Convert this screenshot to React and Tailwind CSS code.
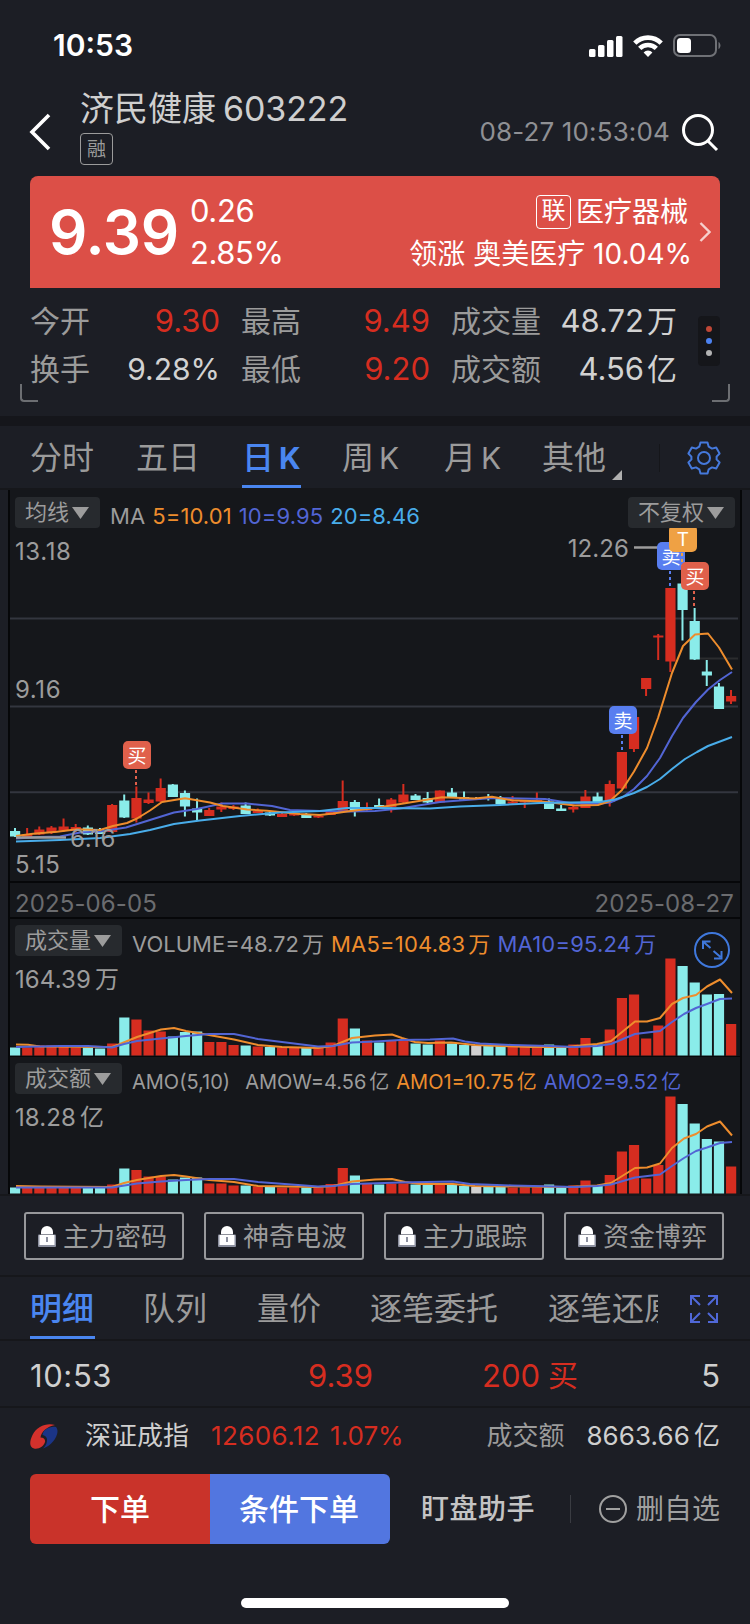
import { useState } from 'react';

const UP = '#d62d20';
const DOWN = '#8aecea';
const ORANGE = '#ee8d2d';
const INDIGO = '#5265d4';
const SKY = '#49adea';

const STEP = 12.136;
const barX = (i) => 15 + i * STEP;

// [direction, high, body top, body bottom, low]
const candles = [
  ['d', 828, 831, 836.5, 837], ['u', 828, 834.5, 837, 837], ['u', 826.5, 829.5, 834.5, 835], ['u', 826, 827.5, 832.5, 834],
  ['u', 818.5, 826.5, 830.5, 832], ['u', 824, 827, 830.5, 832], ['d', 825.5, 827.5, 834.5, 835], ['d', 828, 831.5, 834, 834],
  ['u', 804, 805, 832, 832], ['d', 794.5, 800.5, 817.5, 818], ['u', 786.5, 798, 818.5, 822.5], ['u', 792.5, 799.5, 803, 804],
  ['u', 778.5, 788, 801.5, 802], ['d', 784, 784.5, 797, 797], ['d', 790.5, 793, 806.5, 816.5], ['d', 798.5, 808.5, 812.5, 820.5],
  ['u', 808, 810, 816, 816], ['u', 802.5, 806.5, 809.5, 812], ['u', 805, 806.5, 809, 810], ['d', 802.5, 805.5, 814, 814],
  ['u', 808.5, 811, 813, 813], ['d', 812, 812.5, 815.5, 816], ['u', 813, 814, 817, 817], ['u', 813, 813.5, 815.5, 816],
  ['d', 813, 814, 818, 818], ['u', 815, 816, 817.5, 818], ['u', 809, 812, 815, 815], ['u', 780.5, 801, 811, 812],
  ['d', 800, 802, 811, 816.5], ['u', 802.5, 807, 810, 811], ['d', 798.5, 805, 807.5, 808], ['u', 798, 799.5, 807, 812.5],
  ['u', 784, 794.5, 802.5, 803], ['d', 794, 795.5, 800, 800], ['d', 792, 798, 802.5, 803], ['u', 790.5, 790.5, 802.5, 802.5],
  ['d', 788, 792.5, 797.5, 798], ['d', 791.5, 797, 799.5, 800], ['f', 797, 798, 799.5, 800], ['d', 794, 797, 798.5, 800.5],
  ['d', 796, 798, 804, 804], ['u', 796, 801.5, 803.5, 804], ['u', 801, 801, 802.5, 808], ['u', 792.5, 800, 802, 802],
  ['d', 798.5, 801.5, 809, 809], ['d', 805, 808.5, 811, 811], ['u', 805, 807, 809.5, 812.5], ['u', 790, 796.5, 808, 808],
  ['d', 792.5, 796.5, 802, 802], ['u', 780.5, 784, 802, 806.5], ['u', 752, 752, 788.5, 789], ['u', 717, 717, 749, 752],
  ['u', 678, 678, 689, 696], ['u', 634, 635.5, 637.5, 660], ['u', 588, 588, 661.5, 672], ['d', 566, 583.5, 610, 640.5],
  ['d', 608, 621, 659.5, 660], ['d', 660, 671.5, 675.5, 686], ['d', 683, 686.5, 709, 709], ['u', 690, 696, 701.5, 704],
];

const volume = [
  8, 8, 10, 10, 9, 8, 8, 7, 12, 38, 36, 25, 24, 19, 23.5, 24, 13.5, 13.5, 10.5, 10, 9, 8.5, 8, 7.5, 7.5, 8, 13, 37, 27, 15,
  13, 15, 15, 12, 11, 15, 12, 10.5, 10, 10.5, 9.5, 8.5, 8.5, 8.5, 11, 8.5, 11, 17.5, 11, 26, 57.5, 61, 17, 30, 97, 89.5,
  73, 61, 61.5, 31.5,
];

const amount = [
  6, 6.5, 7.5, 7.5, 7, 6.5, 6, 5.5, 9, 25, 23.5, 17, 17, 14, 16, 16, 10, 10, 8, 8, 7, 6.5, 6, 6, 6, 6, 9.5, 25.5, 18, 10,
  9, 10, 10, 9, 8.5, 10, 8.5, 7.5, 7, 7.5, 7, 6, 6, 6, 9, 6, 8, 13, 8, 18.5, 42, 48.5, 15, 28.5, 97, 89.5, 70, 54.5, 52, 27,
];

const lines = {
  ma5: '16,836 33,833.7 57,831.7 77,829.3 100,830 113,826 127,823 137,818.5 150,810.5 162,802 185,798.3 210,802.5 223,806 247,809.5 267,810.7 300,814 320,815 333,813.5 347,811.5 375,808 405,803.3 442,797.3 475,798.5 492,796.7 512,800.3 542,801.5 555,803 575,805.5 598,805 610,801 622,790 634,771.5 647,748 658,718 672,673 683,646 695,634.5 708,633.5 719,647.5 732,669.5',
  ma10: '16,838.5 40,837 60,836.5 80,832.5 100,831.5 126,827.5 150,820 174,812.5 197,809 222,803.5 247,803.5 272,806 290,810 320,811 350,811.5 375,811 400,808.5 440,802 492,798 545,799 570,803 597,804 610,802.5 622,797.5 634,789 647,776 660,758 672,736 683,718 696,702 708,689.5 720,680 732,672',
  ma20: '16,841.5 60,840 100,838 130,834 150,830 174,824 200,820.5 240,816 280,812.5 320,811 347,808 375,808 430,808.5 460,806.5 500,805 540,803 600,802 615,799.5 634,793 647,787 660,779 672,769 685,759 697,752 708,746 732,737',
  vol5: '16,1044.5 28,1044.8 40,1046.5 112,1047 120,1044 137,1037 161,1029.5 174,1028 186,1031 209,1035 234,1039.5 258,1045 282,1047 318,1048 333,1046 352,1038 375,1035.5 392,1034.5 402,1038 415,1042 428,1043 451,1042.5 475,1045 500,1046 530,1047 567,1047 585,1045 597,1044 611,1041 635,1021.5 647,1021.5 660,1018 672,1004 683,998 696,995 707,986.5 720,979.5 732,993',
  vol10: '16,1047 60,1046 88,1046 112,1047.5 124,1044 137,1041 161,1038.5 186,1036 209,1034 234,1034 258,1039 282,1042 318,1046.5 333,1046 352,1042.5 375,1041.5 400,1040 430,1039.5 453,1038.5 465,1041.5 480,1043.5 512,1045 550,1046 575,1047 597,1046 611,1044 635,1034 660,1031 672,1022 684,1014 696,1008 707,1004 720,999 732,998.5',
  amo5: '16,1186 40,1186.5 112,1187 124,1183 137,1180 161,1176 174,1175 186,1176.5 209,1180 234,1182 258,1186 318,1187 333,1186 352,1181.5 375,1179.5 392,1179 405,1182 420,1184 453,1184 475,1186 567,1187 597,1185.5 611,1183 635,1168 647,1167.5 660,1163.5 672,1148 684,1138.5 696,1134 707,1126.5 720,1121.5 732,1135.5',
  amo10: '16,1187.5 112,1187.5 137,1183.5 161,1181.5 186,1180 209,1179 234,1179 258,1182 318,1186.5 333,1186 352,1184 400,1182.5 453,1181.5 470,1184 512,1185.5 575,1187 597,1186 611,1184.5 635,1177.5 660,1174.5 672,1166 684,1158 696,1151 707,1147.5 720,1143 732,1142',
};

const colorOf = (dir) => (dir === 'u' ? UP : dir === 'd' ? DOWN : '#d0d0d0');

function Line({ points, color }) {
  return <polyline points={points} fill="none" stroke={color} strokeWidth="2" strokeLinejoin="round" />;
}

function Bars({ data, bottom }) {
  return data.map((h, i) => (
    <rect key={i} x={barX(i) - 5} y={bottom - h} width="10.2" height={h} fill={colorOf(candles[i][0])} />
  ));
}

function Marker({ x, y, color, label, h = 28, stem = 16 }) {
  return (
    <g>
      <line x1={x + 13} x2={x + 13} y1={y + h + 1} y2={y + h + stem} stroke={color} strokeWidth="2" strokeDasharray="3 3" />
      <rect x={x} y={y} width="28" height={h} rx="5" fill={color} />
      <text x={x + 14} y={y + h / 2 + 7.5} textAnchor="middle" fontSize="19" fill="#fff">{label}</text>
    </g>
  );
}

function Pill({ children, className = '' }) {
  return (
    <button className={`flex h-[31px] items-center gap-[3px] rounded bg-[#272a2e] pl-[10px] text-[22px] leading-none text-[#9c9c9c] ${className}`}>
      <span className="-mt-0.5">{children}</span>
      <svg width="17" height="12" viewBox="0 0 17 12"><path d="M0 0h17L8.500 12z" fill="#9c9c9c" /></svg>
    </button>
  );
}

function Quote({ label, value, unit, color = 'text-[#d2d2d2]' }) {
  return (
    <div className="flex items-center justify-between">
      <span className="text-[#9b9b9b]">{label}</span>
      <span className={`flex gap-[3px] ${color}`}>
        <span className={value.endsWith('%') ? 'text-[30px]' : 'text-[31px]'}>{value}</span>
        {unit && <span>{unit}</span>}
      </span>
    </div>
  );
}

function LockIcon() {
  return (
    <svg width="18" height="22" viewBox="0 0 18 22">
      <path d="M3 9.500V7a6 6 0 0 1 12 0v2.500z" fill="#fff" />
      <rect x="0" y="9.500" width="18" height="12.500" rx="1" fill="#8d91a0" />
      <rect x="1.500" y="10" width="15" height="10" fill="#fff" />
      <rect x="8" y="12" width="2" height="5" fill="#8d91a0" />
    </svg>
  );
}

function StatusBar() {
  return (
    <div className="flex h-[88px] items-start justify-between pl-[53px] pr-[29px]">
      <span className="mt-[30px] text-[30px] font-semibold leading-[30px] text-white">10:53</span>
      <div className="mt-[34px] flex items-center">
        <svg width="34" height="22" viewBox="0 0 34 22" fill="#fff">
          <rect x="0" y="14" width="6.500" height="8" rx="1.500" />
          <rect x="9" y="10" width="6.500" height="12" rx="1.500" />
          <rect x="18" y="5" width="6.500" height="17" rx="1.500" />
          <rect x="27" y="1" width="6.500" height="21" rx="1.500" />
        </svg>
        <svg className="ml-[10px]" width="30" height="22" viewBox="0 0 30 22" fill="none" stroke="#fff" strokeWidth="4.600">
          <path d="M1.800 8.200a18.500 18.500 0 0 1 26.400 0" />
          <path d="M6.700 13.400a11.800 11.800 0 0 1 16.600 0" />
          <path d="M15 22l-4.400-4.600a6.200 6.200 0 0 1 8.800 0z" fill="#fff" stroke="none" />
        </svg>
        <svg className="ml-[10px]" width="48" height="23" viewBox="0 0 48 23">
          <rect x="1" y="1" width="42" height="21" rx="6" fill="none" stroke="#6f7176" strokeWidth="2" />
          <rect x="4" y="4" width="14" height="15" rx="3.500" fill="#fff" />
          <path d="M45.500 8c2.600 1.200 2.600 6 0 7z" fill="#6f7176" />
        </svg>
      </div>
    </div>
  );
}

function Header() {
  return (
    <div className="flex h-[88px] items-start">
      <svg className="ml-[29px] mt-[25px]" width="22" height="38" viewBox="0 0 22 38" fill="none" stroke="#fff" strokeWidth="3.600">
        <path d="M20 2L3 19l17 17" />
      </svg>
      <div className="ml-[29px]">
        <div className="mt-[3px] flex gap-[7px] whitespace-nowrap text-[34px] leading-[36px] text-[#cfcfcf]">
          <span>济民健康</span>
          <span className="tracking-[-0.1px]">603222</span>
        </div>
        <div className="mt-[6px] flex h-8 w-[33px] items-center justify-center rounded border border-[#9b9b9b] text-[19px] leading-none text-[#9b9b9b]">
          <span>融</span>
        </div>
      </div>
      <span className="ml-auto mt-[30px] text-[26px] leading-[28px] tracking-[0.15px] text-[#8f9094]">08-27 10:53:04</span>
      <svg className="ml-[11px] mr-[31px] mt-[26px]" width="38" height="38" viewBox="0 0 38 38" fill="none" stroke="#fff" strokeWidth="3">
        <circle cx="17" cy="16" r="14.500" />
        <path d="M27 27l9 9" />
      </svg>
    </div>
  );
}

function PriceCard() {
  return (
    <div className="mx-[30px] flex h-28 items-center rounded-t-lg bg-[#dc4f47] text-white">
      <span className="ml-[19px] w-[141px] text-[60px] font-semibold leading-none tracking-[-0.3px]">9.39</span>
      <div className="flex flex-col gap-[10px] text-[31px] leading-8">
        <span className="tracking-[-0.4px]">0.26</span>
        <span className="tracking-[-0.4px]">2.85%</span>
      </div>
      <div className="ml-auto mt-[2px] flex flex-col items-end gap-[8px] text-[28px] leading-[34px]">
        <div className="flex items-center gap-[5px] pr-[4px]">
          <span className="flex h-[34px] w-[35px] items-center justify-center rounded border border-white text-[24px] leading-none">
            <span className="-mt-0.5">联</span>
          </span>
          <span>医疗器械</span>
        </div>
        <span className="whitespace-nowrap">领涨 奥美医疗 10.04%</span>
      </div>
      <svg className="ml-[7px] mr-[9px]" width="12" height="20" viewBox="0 0 12 20" fill="none" stroke="#f6cfcc" strokeWidth="2.400">
        <path d="M1.500 1l9 9-9 9" />
      </svg>
    </div>
  );
}

function Quotes() {
  return (
    <div className="relative flex h-[128px] pl-[30px] pt-[9px]">
      <div className="grid h-[96px] w-[647px] grid-cols-[190px_189px_226px] grid-rows-2 gap-x-[21px] whitespace-nowrap text-[30px] leading-[48px]">
        <Quote label="今开" value="9.30" color="text-[#d62d20]" />
        <Quote label="最高" value="9.49" color="text-[#d62d20]" />
        <Quote label="成交量" value="48.72" unit="万" />
        <Quote label="换手" value="9.28%" />
        <Quote label="最低" value="9.20" color="text-[#d62d20]" />
        <Quote label="成交额" value="4.56" unit="亿" />
      </div>
      <div className="ml-[21px] mt-[19px] flex h-[50px] w-[22px] flex-col items-center justify-center gap-1.5 rounded bg-[#15161a]">
        <span className="size-1.5 rounded-full bg-[#bf4736]" />
        <span className="size-1.5 rounded-full bg-[#4c82f0]" />
        <span className="size-1.5 rounded-full bg-[#b3b3b3]" />
      </div>
      <span className="absolute left-5 top-24 h-[18px] w-[18px] rounded-bl-sm border-b-2 border-l-2 border-[#6c6e72]" />
      <span className="absolute right-5 top-24 h-[18px] w-[18px] rounded-br-sm border-b-2 border-r-2 border-[#6c6e72]" />
    </div>
  );
}

function PeriodTabs({ active, onChange }) {
  const tabs = [['分时'], ['五日'], ['日', 'K'], ['周', 'K'], ['月', 'K'], ['其他']];
  return (
    <div className="flex h-16 border-b-2 border-[#16171b] pl-[30px]">
      <div className="grid grid-cols-[106px_106px_100px_102px_98px_117px] text-[32px]">
        {tabs.map(([a, b], i) => (
          <button key={a} onClick={() => onChange(i)} className="flex">
            <span
              className={`relative flex h-[62px] items-start gap-[5px] pt-[14px] leading-[36px] ${
                i === active ? 'font-medium text-[#4a86f0]' : 'text-[#9b9b9b]'
              }`}
            >
              {a}
              {b && <span className={i === active ? 'text-[30px] font-bold' : 'text-[30px]'}>{b}</span>}
              {i === active && <i className="absolute bottom-0 left-0 h-[3px] w-[59px] bg-[#4a86f0]" />}
            </span>
            {a === '其他' && (
              <svg className="ml-[6px] mt-[44px]" width="10" height="10" viewBox="0 0 10 10"><path d="M10 0v10H0z" fill="#b0b0b0" /></svg>
            )}
          </button>
        ))}
      </div>
      <span className="mt-[18px] h-[28px] w-px bg-[#15161a]" />
      <svg className="ml-[27px] mt-[15px]" width="34" height="34" viewBox="0 0 34 34" fill="none" stroke="#4579dc" strokeWidth="2" strokeLinejoin="round">
        <path d="M13.500 1.500h7l1.200 4.200 3.300 1.900 4.200-1.100 3.400 6-3 3.100v2.800l3 3.100-3.400 6-4.200-1.100-3.300 1.900-1.200 4.200h-7l-1.200-4.200L9 26.400l-4.200 1.100-3.400-6 3-3.100v-2.800l-3-3.100 3.400-6L9 7.600l3.300-1.900z" />
        <circle cx="17" cy="17" r="6" />
      </svg>
    </div>
  );
}

function KChart() {
  return (
    <div className="relative h-[391px]">
      <svg className="absolute inset-0" width="730" height="391" viewBox="10 490 730 391">
        <g stroke="#33363f" strokeWidth="2">
          <path d="M10 618.500H738M10 706.500H738M10 792.300H738" />
          <path d="M700 658.500H738" stroke="#2b2c2e" />
        </g>
        {candles.map(([dir, high, top, bottom, low], i) => (
          <g key={i} fill={colorOf(dir)}>
            <rect x={barX(i) - 1} y={high} width="2" height={low - high} />
            <rect x={barX(i) - 5} y={top} width="10.2" height={bottom - top} />
          </g>
        ))}
        <Line points={lines.ma10} color={INDIGO} />
        <Line points={lines.ma5} color={ORANGE} />
        <Line points={lines.ma20} color={SKY} />
        <path d="M16 837.500H66M634 547.500H658" stroke="#9c9c9c" strokeWidth="2.500" />
        <text x="70" y="846.500" fontSize="24" letterSpacing="0.6" fill="#9c9c9c">6.16</text>
        <text x="629" y="556.500" fontSize="24" letterSpacing="0.1" textAnchor="end" fill="#9c9c9c">12.26</text>
        <Marker x={123} y={741} color="#e0604b" label="买" />
        <Marker x={609} y={706} color="#587ef0" label="卖" />
        <Marker x={657} y={542} color="#587ef0" label="卖" />
        <Marker x={669} y={525} color="#efa144" label="T" h={27} stem={14} />
        <Marker x={681} y={562} color="#e0604b" label="买" />
      </svg>
      <div className="relative flex h-full flex-col px-[5px] text-[24px] leading-none tracking-[0.6px] text-[#9c9c9c]">
        <div className="flex">
          <Pill className="mt-[7px] w-[85px] tracking-normal">均线</Pill>
          <div className="ml-[10px] mt-[15px] flex gap-[7px] text-[22px] leading-[22px] tracking-[0.1px]">
            <span>MA</span>
            <span className="text-[#ee8d2d]">5=10.01</span>
            <span className="text-[#5265d4]">10=9.95</span>
            <span className="text-[#49adea]">20=8.46</span>
          </div>
          <Pill className="ml-auto mt-[7px] w-[107px] tracking-normal">不复权</Pill>
        </div>
        <span className="mt-[12px]">13.18</span>
        <span className="mt-[114px]">9.16</span>
        <span className="mt-[151px]">5.15</span>
      </div>
    </div>
  );
}

function SubChart({ title, max, maxUnit, data, top, l5, l10, children, expand }) {
  return (
    <div className="relative h-[137px]">
      <svg className="absolute inset-0" width="730" height="137" viewBox={`10 ${top} 730 137`}>
        <Bars data={data} bottom={top + 136.5} />
        <Line points={l5} color={ORANGE} />
        <Line points={l10} color={INDIGO} />
      </svg>
      <div className="relative px-[5px] pt-[6px] text-[#9c9c9c]">
        <div className="flex">
          <Pill className="w-[107px]">{title}</Pill>
          <div className="ml-[10px] mt-[8px] flex whitespace-nowrap leading-[22px]">{children}</div>
          {expand && (
            <svg className="absolute right-[9px] top-[12px]" width="38" height="38" viewBox="0 0 38 38" fill="none" stroke="#3f78dc" strokeWidth="2">
              <circle cx="19" cy="19" r="17" />
              <path d="M10 18v-7.500h7.500M10.500 11l7 6M20.500 20l7 6M28.500 20v7.500h-7.500" />
            </svg>
          )}
        </div>
        <div className="mt-[11px] flex gap-[4px] text-[24px] leading-[26px] tracking-[0.1px]">
          <span>{max}</span>
          <span>{maxUnit}</span>
        </div>
      </div>
    </div>
  );
}

function Value({ text, unit, className = '' }) {
  return (
    <span className={`flex gap-[3px] ${className}`}>
      <span>{text}</span>
      <span>{unit}</span>
    </span>
  );
}

function DetailTabs() {
  const tabs = ['明细', '队列', '量价', '逐笔委托', '逐笔还原'];
  return (
    <div className="flex h-[64px] items-start border-b-2 border-[#16171b] pl-[30px]">
      <div className="grid w-[628px] grid-cols-[113px_114px_113px_178px_110px] overflow-hidden whitespace-nowrap text-[32px]">
        {tabs.map((t, i) => (
          <button key={t} className="flex">
            <span
              className={`relative h-[62px] pt-[14px] leading-[36px] ${i === 0 ? 'font-medium text-[#4a86f0]' : 'text-[#9b9b9b]'}`}
            >
              {t}
              {i === 0 && <i className="absolute bottom-0 left-0 h-[3px] w-[65px] bg-[#4a86f0]" />}
            </span>
          </button>
        ))}
      </div>
      <svg className="ml-[32px] mt-[18px]" width="28" height="28" viewBox="0 0 28 28" fill="none" stroke="#5068d8" strokeWidth="2">
        <path d="M1 10V1h9M1 1l9 9M18 1h9v9M27 1l-9 9M1 18v9h9M1 27l9-9M27 18v9h-9M27 27l-9-9" />
      </svg>
    </div>
  );
}

function IndexRow() {
  return (
    <div className="flex h-[66px] items-center whitespace-nowrap px-[30px] pb-[10px] text-[26px] leading-[30px] text-[#cfcfcf]">
      <svg width="28" height="25" viewBox="0 0 28 25">
        <path d="M25 1C17-1.500 7 2 2.500 11-.5 17.500-1 23 4 24.500c5 1 10-2.500 11-6.500.500-2.500-1-4.500-4.500-4.500C11 8 17 2.500 25 1z" fill="#d4312c" />
        <path d="M26 3c-7-1-13 3-13.500 8 3 .5 5 2.500 4.500 6-.3 3-2 5.500-4 7.500C21 22 27 14 27.500 8c.200-2-.500-4-1.500-5z" fill="#1b3486" />
      </svg>
      <span className="ml-[27px]">深证成指</span>
      <span className="ml-[22px] tracking-[0.4px] text-[#d62d20]">12606.12</span>
      <span className="ml-[10px] text-[#d62d20]">1.07%</span>
      <span className="ml-auto text-[#9b9b9b]">成交额</span>
      <span className="ml-[22px] tracking-[0.1px]">8663.66</span>
      <span className="ml-[4px]">亿</span>
    </div>
  );
}

function ActionBar() {
  return (
    <div className="flex h-[70px] items-center whitespace-nowrap px-[30px] text-[28px] leading-none">
      <div className="flex h-full w-[360px] overflow-hidden rounded-md text-[30px] font-medium text-white">
        <button className="w-[180px] bg-[#c9332a]">下单</button>
        <button className="w-[180px] bg-[#5276e0] pr-0.5">条件下单</button>
      </div>
      <button className="ml-[31px] font-medium tracking-[0.5px] text-[#c4c4c4]">盯盘助手</button>
      <span className="ml-[35px] h-7 w-px bg-[#3a3c42]" />
      <svg className="ml-[28px]" width="28" height="28" viewBox="0 0 28 28" fill="none" stroke="#a0a0a0" strokeWidth="2">
        <circle cx="14" cy="14" r="13" />
        <path d="M7 14h14" />
      </svg>
      <button className="ml-auto text-[#a0a0a0]">删自选</button>
    </div>
  );
}

export default function App() {
  const [period, setPeriod] = useState(2);
  const signals = ['主力密码', '神奇电波', '主力跟踪', '资金博弈'];

  return (
    <div className="flex h-[1624px] w-[750px] flex-col overflow-hidden bg-[#1c1e25] font-['Inter','Noto_Sans_CJK_SC',sans-serif]">
      <StatusBar />
      <Header />
      <PriceCard />
      <Quotes />
      <div className="h-[10px] bg-[#15161b]" />
      <PeriodTabs active={period} onChange={setPeriod} />

      <div className="mx-[8px] border-x-2 border-[#060709] bg-[#15171b]">
        <KChart />
        <div className="flex h-[38px] items-center justify-between border-y-2 border-[#060709] pl-[5px] pr-[6px] pt-2 text-[24px] leading-none tracking-[0.1px] text-[#6b6c6f]">
          <span>2025-06-05</span>
          <span>2025-08-27</span>
        </div>
        <SubChart title="成交量" max="164.39" maxUnit="万" data={volume} top={919} l5={lines.vol5} l10={lines.vol10} expand>
          <div className="flex gap-[7px] text-[22px]">
            <Value text="VOLUME=48.72" unit="万" />
            <Value text="MA5=104.83" unit="万" className="tracking-[0.2px] text-[#ee8d2d]" />
            <Value text="MA10=95.24" unit="万" className="tracking-[0.2px] text-[#5265d4]" />
          </div>
        </SubChart>
        <div className="h-px bg-[#060709]" />
        <SubChart title="成交额" max="18.28" maxUnit="亿" data={amount} top={1057} l5={lines.amo5} l10={lines.amo10}>
          <div className="flex gap-[7px] text-[20px]">
            <span className="mr-[8px]">AMO(5,10)</span>
            <Value text="AMOW=4.56" unit="亿" />
            <Value text="AMO1=10.75" unit="亿" className="text-[#ee8d2d]" />
            <Value text="AMO2=9.52" unit="亿" className="text-[#5265d4]" />
          </div>
        </SubChart>
      </div>

      <div className="flex h-[83px] gap-5 border-b-2 border-t-2 border-[#16171b] px-6 pt-4">
        {signals.map((s) => (
          <button key={s} className="flex h-12 w-40 items-center gap-[7px] whitespace-nowrap rounded-[3px] border-2 border-[#97989b] pl-3 text-[26px] leading-none text-[#9b9b9b]">
            <LockIcon />
            <span className="pt-0.5">{s}</span>
          </button>
        ))}
      </div>

      <DetailTabs />

      <div className="grid h-[67px] grid-cols-[278px_174px_1fr_auto] items-center border-b-2 border-[#16171b] px-[30px] pt-1 text-[31px] leading-none text-[#cfcfcf]">
        <span className="tracking-[0.6px]">10:53</span>
        <span className="text-[#d62d20]">9.39</span>
        <span className="flex gap-[8px] text-[#d62d20]">
          <span>200</span>
          <span className="text-[30px]">买</span>
        </span>
        <span>5</span>
      </div>

      <IndexRow />
      <ActionBar />

      <div className="mx-auto mt-[54px] h-[10px] w-[268px] rounded-full bg-white" />
    </div>
  );
}
